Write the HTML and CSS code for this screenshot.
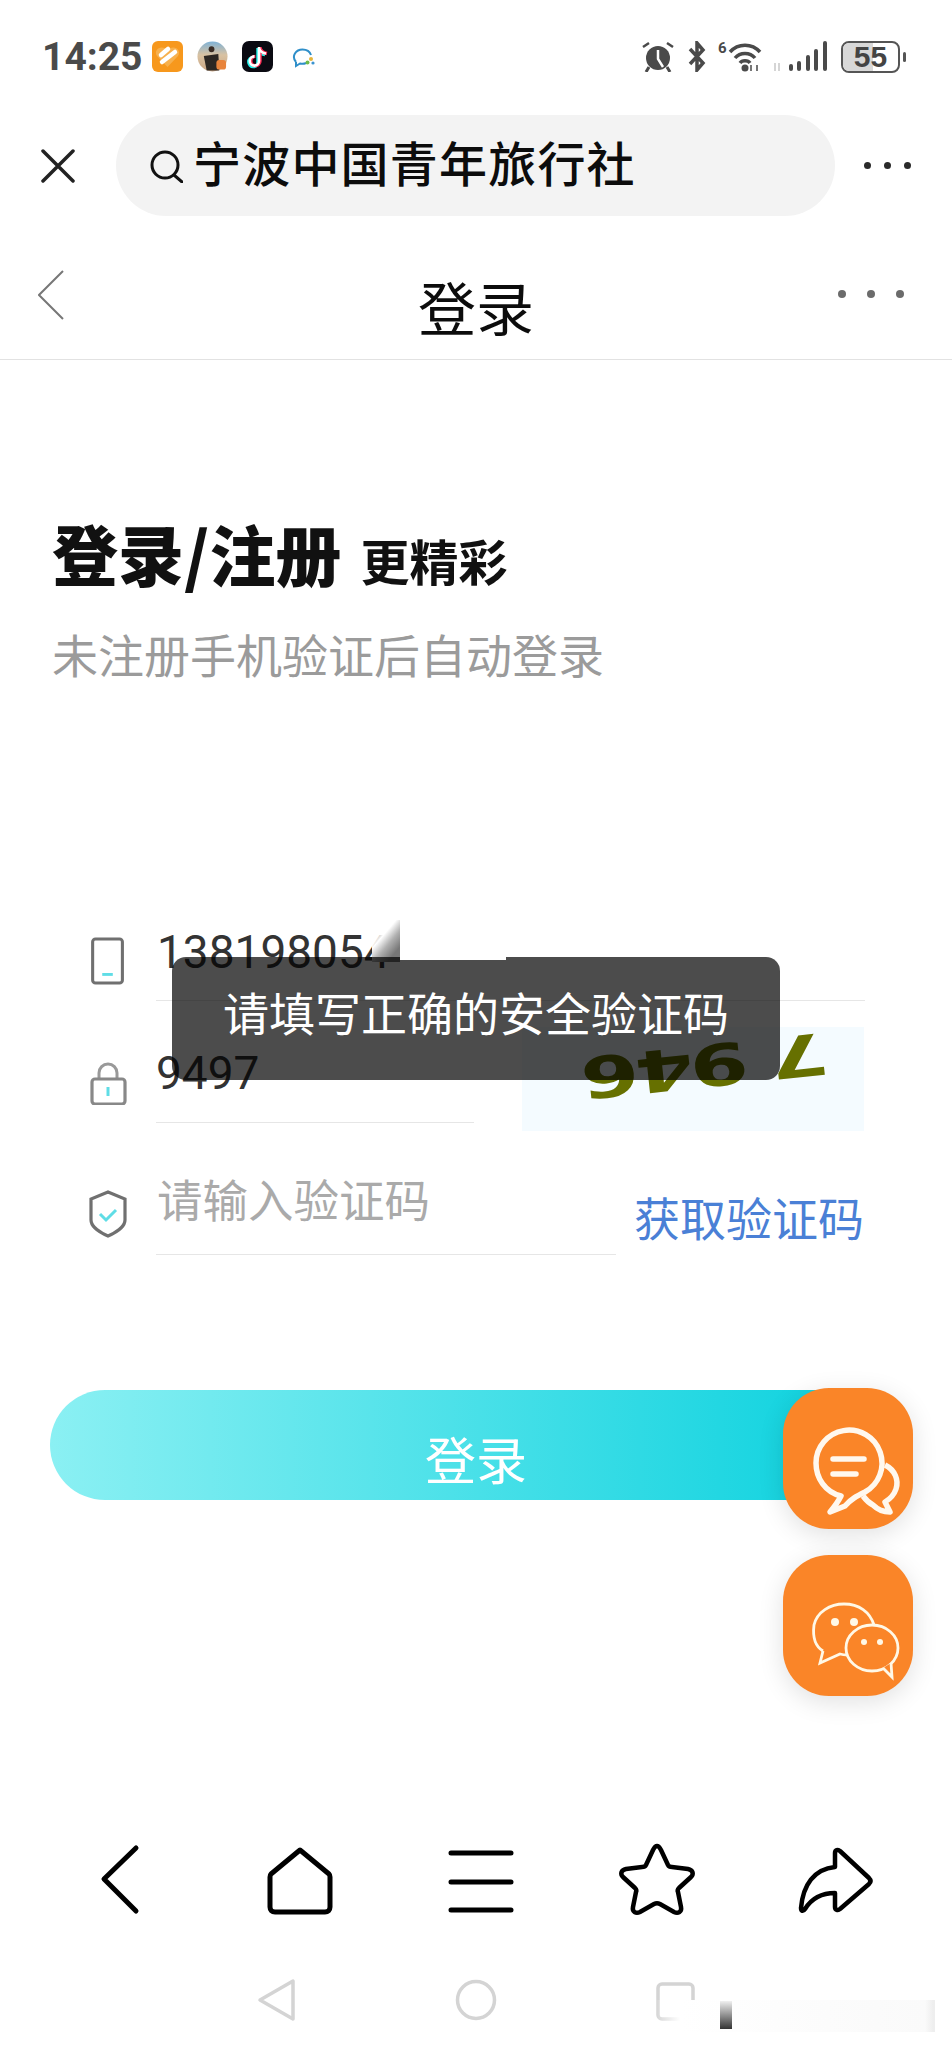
FILE: index.html
```html
<!DOCTYPE html>
<html lang="zh-CN">
<head>
    <meta charset="UTF-8">
    <meta name="viewport" content="width=device-width, initial-scale=1.0">
    <title>登录</title>
    <link rel="stylesheet" href="styles.css">
</head>
<body>
    <div class="phone">
        <!-- Status bar -->
        <div class="statusbar">
            <span class="time">14:25</span>
            <svg class="notif" viewBox="0 0 31 31"><rect width="31" height="31" rx="6" fill="#f7981d"/><path d="M15.5 26 L5 15 C1 9 9 3 15.5 9 C22 3 30 9 26 15 Z" fill="#f7b04d"/><path d="M9 14 L16 8 M10 21 L23 11" stroke="#fff" stroke-width="4.5" stroke-linecap="round"/></svg>
            <svg class="notif avatar" viewBox="0 0 32 31"><defs><linearGradient id="sky" x1="0" y1="0" x2="0" y2="1"><stop offset="0" stop-color="#7fb2d6"/><stop offset=".45" stop-color="#d9c2a2"/><stop offset="1" stop-color="#c9a684"/></linearGradient></defs><circle cx="16" cy="15.5" r="15.5" fill="url(#sky)"/><circle cx="15" cy="8" r="3" fill="#3a2c24"/><path d="M7 15 L22 13 L23 30 L10 30 Z" fill="#2c2723"/><rect x="20" y="19" width="10" height="10" rx="3" fill="#e8843c"/></svg>
            <svg class="notif" viewBox="0 0 31 31"><rect width="31" height="31" rx="7" fill="#0a0a12"/><path d="M17 6 V20 A4.6 4.6 0 1 1 12.4 15.4 M17 7 C18 11 21 12 24 12.5" fill="none" stroke="#25f4ee" stroke-width="3.4" transform="translate(-1 1)"/><path d="M17 6 V20 A4.6 4.6 0 1 1 12.4 15.4 M17 7 C18 11 21 12 24 12.5" fill="none" stroke="#fe2c55" stroke-width="3.4" transform="translate(1 0)"/><path d="M17 6 V20 A4.6 4.6 0 1 1 12.4 15.4 M17 7 C18 11 21 12 24 12.5" fill="none" stroke="#fff" stroke-width="2.6"/></svg>
            <svg class="wecom" viewBox="0 0 24 20"><path d="M4 14 C-1 8 4 1.500 10.500 1.500 C15 1.500 18 4 19 7" fill="none" stroke="#2f8fc9" stroke-width="2"/><path d="M4 14 L4 18 L8 15.500 C10 16 12 16 14 15" fill="none" stroke="#2f8fc9" stroke-width="2"/><circle cx="19" cy="11" r="2" fill="#e5b53a"/><circle cx="15.500" cy="14.500" r="2" fill="#6fbb4a"/><circle cx="21" cy="15" r="1.600" fill="#3b94d0"/></svg>

            <div class="status-right">
                <svg class="st-alarm" viewBox="0 0 32 31"><circle cx="16" cy="17" r="12" fill="#4a4a4a"/><path d="M16 9 V18 L21 26" fill="none" stroke="#fff" stroke-width="2.5"/><path d="M1 6 L7 2 M31 6 L25 2" stroke="#4a4a4a" stroke-width="2.500"/><path d="M7 26 L4 31 M25 26 L28 31" stroke="#4a4a4a" stroke-width="3"/></svg>
                <svg class="st-bt" viewBox="0 0 20 31"><path d="M2 8 L15 22 L9 29 L9 2 L15 9 L2 23" fill="none" stroke="#4a4a4a" stroke-width="3.500"/></svg>
                <span class="st-six">6</span>
                <svg class="st-wifi" viewBox="0 0 34 31"><path d="M2 11 C10 2 24 2 32 11 M7 17 C12 11 22 11 27 17 M12 22 C14 19 20 19 22 22" fill="none" stroke="#4a4a4a" stroke-width="3.500"/><circle cx="17" cy="27" r="3.500" fill="#4a4a4a"/><path d="M23 30 V24 M29 30 V24" stroke="#4a4a4a" stroke-width="1.500"/></svg>
                <svg class="st-signal" viewBox="0 0 56 31"><path d="M3 30 V22 M7 30 V22" stroke="#d5d5d5" stroke-width="2"/><g stroke="#4a4a4a" stroke-width="4" stroke-linecap="round"><path d="M19 28 V25"/><path d="M27 28 V22"/><path d="M36 28 V16"/><path d="M44 28 V10"/><path d="M53 28 V2"/></g></svg>
                <div class="battery"><span class="battery-fill"></span><span class="battery-num">55</span></div>
                <span class="battery-nub"></span>
            </div>
        </div>

        <!-- Browser bar -->
        <div class="browserbar">
            <svg class="close-icon" viewBox="0 0 34 34"><path d="M2 2 L32 32 M32 2 L2 32" stroke="#222" stroke-width="3.500" stroke-linecap="round"/></svg>
            <div class="search-pill">
                <svg class="search-icon" viewBox="0 0 33 33"><circle cx="15" cy="15" r="13" fill="none" stroke="#111" stroke-width="3"/><path d="M24 25 L32 32" stroke="#111" stroke-width="3" stroke-linecap="round"/></svg>
                <span class="search-text">宁波中国青年旅行社</span>
            </div>
            <div class="dots dots-dark"><i></i><i></i><i></i></div>
        </div>

        <!-- Page header -->
        <div class="pagehead">
            <svg class="back-thin" viewBox="0 0 26 50"><path d="M25 1 L1 25 L25 49" fill="none" stroke="#777" stroke-width="2"/></svg>
            <div class="page-title">登录</div>
            <div class="dots dots-gray"><i></i><i></i><i></i></div>
        </div>

        <!-- Intro -->
        <div class="intro">
            <h1 class="headline">登录/注册 <small>更精彩</small></h1>
            <p class="subline">未注册手机验证后自动登录</p>
        </div>

        <!-- Form -->
        <form class="form">
            <div class="row row-phone">
                <svg class="field-icon" viewBox="0 0 38 50"><rect x="3" y="2" width="31" height="46" rx="3" fill="none" stroke="#707070" stroke-width="3.200"/><path d="M13 39 H24" stroke="#5fdde6" stroke-width="3"/></svg>
                <div class="field">138198054</div>
            </div>
            <div class="row row-code">
                <svg class="field-icon lock" viewBox="0 0 38 44"><path d="M10 18 V12 A9 9 0 0 1 28 12 V18" fill="none" stroke="#999" stroke-width="3"/><rect x="3" y="18" width="33" height="25" rx="3" fill="none" stroke="#888" stroke-width="3.200"/><path d="M19 26 V35" stroke="#5fdde6" stroke-width="3"/></svg>
                <div class="field field-short">9497</div>
                <div class="captcha"><span>7 946</span></div>
            </div>
            <div class="row row-sms">
                <svg class="field-icon" viewBox="0 0 38 48"><path d="M19 2 L36 9 V30 C36 37 26 43 19 46 C12 43 2 37 2 30 V9 Z" fill="none" stroke="#707070" stroke-width="3.200"/><path d="M11 24 L17 30 L27 20" fill="none" stroke="#5fdde6" stroke-width="3"/></svg>
                <div class="field field-mid placeholder">请输入验证码</div>
                <a class="get-code">获取验证码</a>
            </div>
            <button class="submit" type="button">登录</button>
        </form>

        <!-- Bottom toolbar -->
        <div class="toolbar">
            <svg viewBox="0 0 80 76"><path d="M56 9 L24 40 L56 72" transform="translate(0 -2)" fill="none" stroke="#000" stroke-width="5" stroke-linecap="round" stroke-linejoin="round"/></svg>
            <svg viewBox="0 0 80 76"><path d="M41 9 L70 33 C71 34 71 35 71 36 V66 C71 69 69 71 66 71 H16 C13 71 11 69 11 66 V36 C11 35 11 34 12 33 Z" fill="none" stroke="#000" stroke-width="5" stroke-linejoin="round"/></svg>
            <svg viewBox="0 0 80 76"><path d="M13 12 H73 M13 41 H73 M13 69 H73" stroke="#000" stroke-width="5" stroke-linecap="round"/></svg>
            <svg viewBox="0 0 80 76"><path d="M40 5 C42 5 43 7 44 9 L51 24 C52 26 53 26 55 26 L71 28 C76 29 77 33 74 36 L62 47 C61 48 60 49 61 51 L64 66 C65 71 61 73 57 71 L43 63 C41 62 39 62 37 63 L23 71 C19 73 15 71 16 66 L19 51 C20 49 19 48 18 47 L6 36 C3 33 4 29 9 28 L25 26 C27 26 28 26 29 24 L36 9 C37 7 38 5 40 5 Z" fill="none" stroke="#000" stroke-width="4.500"/></svg>
            <svg viewBox="0 0 80 76"><path d="M39 12 C39 9 42 8 44 10 L73 37 C75 39 75 41 73 43 L44 68 C42 70 39 69 39 66 V52 C22 52 14 60 9 68 C7 71 5 70 5 67 C7 44 18 28 39 26 Z" fill="none" stroke="#000" stroke-width="4.500" stroke-linejoin="round"/></svg>
        </div>

        <!-- System navigation -->
        <div class="sysnav">
            <svg viewBox="0 0 50 44"><path d="M42 3 V41 L9 22 Z" fill="none" stroke="#d4d4d4" stroke-width="3.500" stroke-linejoin="round"/></svg>
            <svg viewBox="0 0 50 44"><circle cx="25" cy="22" r="18.500" fill="none" stroke="#d4d4d4" stroke-width="3.500"/></svg>
            <svg viewBox="0 0 50 44"><rect x="7" y="6" width="35" height="35" rx="4" fill="none" stroke="#d4d4d4" stroke-width="3.500"/></svg>
        </div>

        <!-- Floating buttons -->
        <div class="floats">
            <div class="float-btn">
                <svg viewBox="0 0 130 141"><path d="M58 108 C42 104 33 90 33 75 A33 33 0 1 1 82 104 C74 108 68 111 62 118 L47 124 C52 118 55 114 58 108 Z" fill="none" stroke="#fff8ee" stroke-width="5.500" stroke-linejoin="round"/><path d="M50 71 H81 M50 86 H73" stroke="#fff8ee" stroke-width="5.500" stroke-linecap="round"/><path d="M102 77 C112 82 116 92 113 101 C111 107 107 111 102 114 L107 124 C100 124 94 121 90 117 C86 115 83 112 80 108" fill="none" stroke="#fff8ee" stroke-width="5.500" stroke-linejoin="round"/></svg>
            </div>
            <div class="float-btn">
                <svg viewBox="0 0 130 141"><path d="M40 96 C30 90 30 78 31 70 C34 57 47 49 61 49 C76 49 87 57 91 70" fill="none" stroke="#fff8e6" stroke-width="2.800"/><path d="M40 96 L37 108 L57 99 C60 100 62 100 65 100" fill="none" stroke="#fff8e6" stroke-width="2.800"/><ellipse cx="89" cy="93" rx="26" ry="23" fill="none" stroke="#fff8e6" stroke-width="2.800"/><path d="M100 113 L109 122 L108 108" fill="#fa8528" stroke="#fff8e6" stroke-width="2.800"/><circle cx="52" cy="67" r="4" fill="#fff8e6"/><circle cx="71" cy="67" r="4" fill="#fff8e6"/><circle cx="81" cy="87" r="3" fill="#fff8e6"/><circle cx="97" cy="87" r="3" fill="#fff8e6"/></svg>
            </div>
        </div>

        <!-- Toast and the smudges left on the capture -->
        <div class="smudge-phone"></div>
        <div class="toast">请填写正确的安全验证码</div>
        <div class="smudge-top"></div>
        <div class="smudge-corner"></div>
        <div class="smudge-bar"></div>
    </div>
</body>
</html>
```

FILE: styles.css
```css
* {
    box-sizing: border-box;
}

body {
    margin: 0;
    background: #fff;
    font-family: "Noto Sans CJK SC", "Noto Sans", sans-serif;
    color: #111;
}

.phone {
    position: relative;
    width: 952px;
    height: 2048px;
    overflow: hidden;
    background: #fff;
}

/* Status bar */
.statusbar {
    height: 115px;
    padding: 41px 0 0 43px;
    display: flex;
    align-items: flex-start;
}

.time {
    font-family: Roboto, sans-serif;
    font-weight: 700;
    font-size: 39px;
    line-height: 33px;
    color: #4a4a4a;
    width: 110px;
    margin-left: -1px;
}

.notif {
    width: 31px;
    height: 31px;
    margin-right: 14px;
}

.wecom {
    width: 24px;
    height: 20px;
    margin: 7px 0 0 5px;
}

.status-right {
    margin-left: auto;
    padding-right: 46px;
    display: flex;
    align-items: flex-start;
    position: relative;
}

.st-alarm {
    width: 32px;
    height: 31px;
}

.st-bt {
    width: 20px;
    height: 31px;
    margin-left: 14px;
}

.st-six {
    font-family: Roboto, sans-serif;
    font-weight: 700;
    font-size: 15px;
    line-height: 15px;
    color: #4a4a4a;
    width: 10px;
    margin-left: 10px;
}

.st-wifi {
    width: 34px;
    height: 31px;
}

.st-signal {
    width: 56px;
    height: 31px;
    margin-left: 10px;
}

.battery {
    position: relative;
    width: 59px;
    height: 32px;
    margin-left: 13px;
    border: 2.5px solid #555;
    border-radius: 8px;
    overflow: hidden;
}

.battery-fill {
    position: absolute;
    left: 0;
    top: 0;
    bottom: 0;
    width: 55%;
    background: #d8d8d8;
}

.battery-num {
    position: relative;
    display: block;
    font-family: "Liberation Sans", sans-serif;
    font-weight: 700;
    font-size: 30px;
    line-height: 27px;
    text-align: center;
    color: #444;
}

.battery-nub {
    width: 3px;
    height: 10px;
    margin: 11px 0 0 3px;
    background: #555;
    border-radius: 2px;
}

/* Browser bar */
.browserbar {
    height: 101px;
    padding-left: 41px;
    display: flex;
    align-items: center;
}

.close-icon {
    width: 34px;
    height: 34px;
    flex: none;
}

.search-pill {
    width: 719px;
    height: 101px;
    margin-left: 41px;
    padding-left: 34px;
    border-radius: 51px;
    background: #f3f3f3;
    display: flex;
    align-items: center;
}

.search-icon {
    width: 33px;
    height: 33px;
    flex: none;
    margin-top: 2px;
}

.search-text {
    margin: -10px 0 0 10px;
    font-size: 48px;
    font-weight: 500;
    line-height: 60px;
    letter-spacing: 1.2px;
    color: #0c0c0c;
}

.dots {
    display: flex;
}

.dots i {
    display: block;
    border-radius: 50%;
}

.dots-dark {
    margin-left: 29px;
    gap: 13px;
}

.dots-dark i {
    width: 7px;
    height: 7px;
    background: #2a2a2a;
}

.dots-gray {
    gap: 21px;
    margin-top: 74px;
    justify-self: end;
    margin-right: 48px;
}

.dots-gray i {
    width: 8px;
    height: 8px;
    background: #6b6b6b;
}

/* Page header */
.pagehead {
    height: 144px;
    border-bottom: 1px solid #e2e2e2;
    display: grid;
    grid-template-columns: 1fr auto 1fr;
    align-items: start;
}

.back-thin {
    width: 26px;
    height: 50px;
    margin: 54px 0 0 38px;
}

.page-title {
    font-size: 58px;
    line-height: 70px;
    margin-top: 55px;
    color: #0c0c0c;
}

/* Intro */
.intro {
    padding: 157px 0 0 52px;
}

.headline {
    margin: 0;
    font-size: 66px;
    font-weight: 900;
    line-height: 70px;
    color: #111;
}

.headline small {
    font-size: 49px;
    font-weight: 700;
    margin-left: 4px;
}

.subline {
    margin: 28px 0 0;
    font-size: 46px;
    line-height: 60px;
    color: #9b9b9b;
}

/* Form */
.form {
    margin-top: 237px;
}

.row {
    display: flex;
    padding: 0 87px 0 89px;
}

.field-icon {
    width: 38px;
    flex: none;
    align-self: center;
    height: 48px;
    margin-right: 29px;
}

.field {
    flex: 1;
    padding: 2px 0 18px 1px;
    border-bottom: 1px solid #e6e6e6;
    font-family: Roboto, "Noto Sans CJK SC", sans-serif;
    font-size: 46px;
    line-height: 60px;
    color: #333;
}

.row-code {
    margin-top: 26px;
    height: 105px;
}

.row-code .lock {
    height: 44px;
    margin-top: 6px;
}

.field-short {
    flex: none;
    width: 318px;
    height: 80px;
    margin-top: 16px;
    padding: 0 0 19px;
}

.captcha {
    width: 342px;
    height: 104px;
    margin-left: 48px;
    padding: 0 0 28px 26px;
    background: #f4fbff;
    display: flex;
    align-items: center;
    justify-content: center;
    flex: none;
}

.captcha span {
    display: block;
    font-family: "DejaVu Sans", sans-serif;
    font-weight: 700;
    font-size: 70px;
    line-height: 60px;
    letter-spacing: -3px;
    white-space: pre;
    color: #667000;
    transform: rotate(174deg) scale(1.2, 0.82);
}

.row-sms {
    margin-top: 41px;
}

.field-mid {
    flex: none;
    width: 460px;
    height: 82px;
    padding: 0 0 21px 1px;
}

.placeholder {
    font-size: 45.5px;
    color: #aaa;
}

.get-code {
    margin: 13px 0 0 18px;
    font-size: 46px;
    line-height: 60px;
    white-space: nowrap;
    color: #4a80d6;
}

.submit {
    display: block;
    width: 852px;
    height: 110px;
    margin: 135px 0 0 50px;
    border: 0;
    border-radius: 55px;
    padding: 26px 0 0;
    background: linear-gradient(90deg, #8bf0f3, #16d4e0 88%);
    font-family: inherit;
    font-size: 51px;
    line-height: 60px;
    color: #fff;
}

/* Bottom toolbar */
.toolbar {
    margin-top: 341px;
    padding-left: 80px;
    display: flex;
    gap: 99px;
}

.toolbar svg {
    width: 80px;
    height: 76px;
    flex: none;
}

.sysnav {
    margin-top: 61px;
    padding-left: 251px;
    display: flex;
    gap: 150px;
}

.sysnav svg {
    width: 50px;
    height: 44px;
    flex: none;
}

/* Floating buttons */
.floats {
    position: absolute;
    left: 783px;
    top: 1388px;
    display: flex;
    flex-direction: column;
    gap: 26px;
}

.float-btn {
    width: 130px;
    height: 141px;
    border-radius: 46px;
    background: #fa8528;
    box-shadow: 0 6px 26px rgba(0, 0, 0, 0.12);
}

.float-btn svg {
    display: block;
    width: 130px;
    height: 141px;
}

/* Toast */
.toast {
    position: absolute;
    left: 172px;
    top: 957px;
    width: 608px;
    height: 123px;
    padding-bottom: 16px;
    border-radius: 14px;
    background: rgba(0, 0, 0, 0.7);
    display: flex;
    align-items: center;
    justify-content: center;
    font-size: 46px;
    line-height: 60px;
    color: #fff;
}

.smudge-phone {
    position: absolute;
    left: 372px;
    top: 920px;
    width: 28px;
    height: 42px;
    background: linear-gradient(130deg, rgba(255, 255, 255, 0) 10%, #fff 38%, #b0b0b0 58%, #777 80%);
}

.smudge-top {
    position: absolute;
    left: 400px;
    top: 955px;
    width: 106px;
    height: 5px;
    background: #fff;
}

.smudge-corner {
    position: absolute;
    left: 655px;
    top: 2000px;
    width: 280px;
    height: 32px;
    background: linear-gradient(90deg, rgba(255, 255, 255, 0), #fff 25px, #fafafa 270px, #eee 278px);
}

.smudge-bar {
    position: absolute;
    left: 720px;
    top: 2001px;
    width: 12px;
    height: 28px;
    background: linear-gradient(180deg, #f0f0f0, #333);
}
```
